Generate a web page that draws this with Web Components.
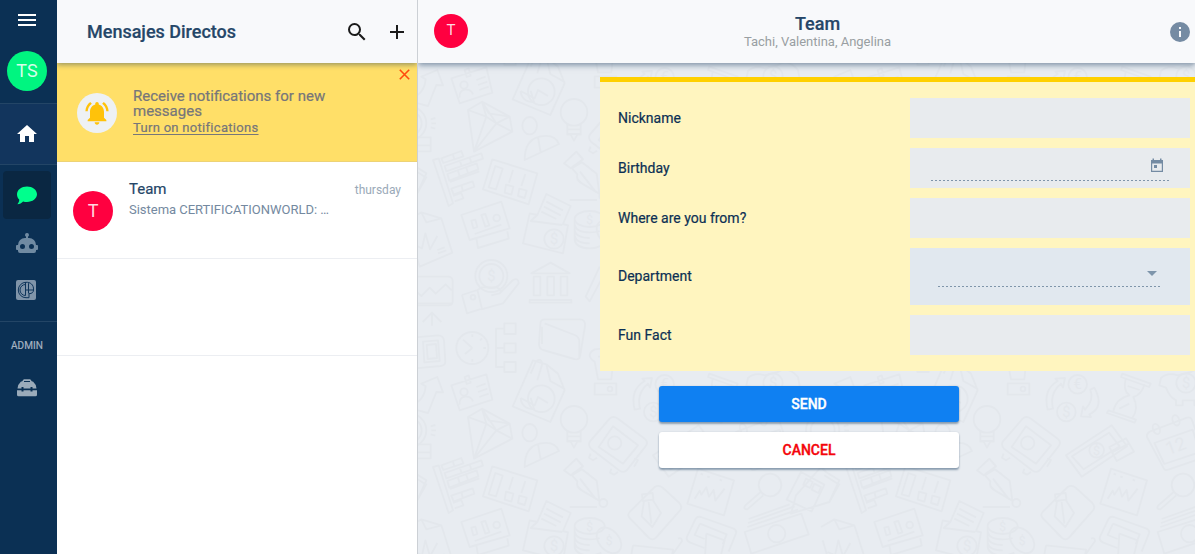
<!DOCTYPE html>
<html lang="es">
<head>
<meta charset="utf-8">
<title>Mensajes Directos</title>
<style>
html,body{margin:0;height:100%;overflow:hidden}
body{font-family:Roboto,"Liberation Sans",sans-serif;color:#254668}
</style>
</head>
<body>
<chat-app></chat-app>
<script>
const define = (name, html) => customElements.define(name, class extends HTMLElement {
  constructor() {
    super();
    const t = document.createElement('template');
    t.innerHTML = html;
    this.attachShadow({mode: 'open'}).append(t.content.cloneNode(true));
  }
});

define('round-avatar', `
<style>:host{display:flex;align-items:center;justify-content:center;flex:none;box-sizing:border-box;width:var(--size,40px);height:var(--size,40px);border-radius:50%;background:var(--fill,#ff0040);color:#ffffffd9;font-size:var(--text,18px);padding-bottom:1px}</style><slot></slot>`);

define('side-nav', `
<style>
:host{display:flex;flex-direction:column;width:57px;flex:none;background:#0b3054;color:#9aa9ba}
section{display:flex;flex-direction:column;align-items:center;width:54px;padding-right:3px;box-sizing:content-box;border-bottom:1px solid #234566}
.top{height:103px}.top svg{margin-top:10px}.top round-avatar{margin:21px 0 0;--fill:#00f580;padding-bottom:2px}
.home{height:60px;background:#12355d;justify-content:center}
.apps{height:156px;}
.tile{width:48px;height:48px;border-radius:4px;display:flex;align-items:center;justify-content:center}
.on{background:#0a2742;margin-top:6px;}
.admin{border:0}
.admin span{font-size:10px;line-height:12px;margin-top:18px;color:#a6b3c1;letter-spacing:.1px;-webkit-text-stroke:.2px #a6b3c1}
svg{display:block;flex:none}
</style>
<section class="top">
<svg width="20" height="20" viewBox="0 0 20 20"><path d="M1 4h18v2H1zM1 9h18v2H1zM1 14h18v2H1z" fill="#fff"/></svg>
<round-avatar>TS</round-avatar></section>
<section class="home"><svg width="24" height="24" viewBox="0 0 24 24"><path d="M10 20v-6h4v6h5v-8h3L12 3 2 12h3v8z" fill="#fff"/></svg></section>
<section class="apps">
<div class="tile on"><svg width="20" height="19" viewBox="0 0 20 19"><path d="M10 .6c5.500 0 10 3.400 10 7.700s-4.500 7.700-10 7.700c-1.400 0-2.700-.2-3.900-.6C4.700 17 2.600 18.200.4 18.200c1.300-1.500 2-3 1.800-4.600C.8 12.200 0 10.300 0 8.300 0 4 4.500.6 10 .6z" fill="#00ff8d"/></svg></div>
<div class="tile"><svg width="24" height="24" viewBox="0 0 24 24"><path fill="#708aa2" fill-rule="evenodd" d="M12 2a2 2 0 0 1 1 3.730V7h1a7 7 0 0 1 7 7h1a1 1 0 0 1 1 1v3a1 1 0 0 1-1 1h-1v1a2 2 0 0 1-2 2H5a2 2 0 0 1-2-2v-1H2a1 1 0 0 1-1-1v-3a1 1 0 0 1 1-1h1a7 7 0 0 1 7-7h1V5.730A2 2 0 0 1 12 2zM7.500 13a2.500 2.500 0 1 0 0 5 2.500 2.500 0 0 0 0-5zm9 0a2.500 2.500 0 1 0 0 5 2.500 2.500 0 0 0 0-5z"/></svg></div>
<div class="tile" style="height:46px;margin-right:2px"><svg width="20" height="20" viewBox="0 0 20 20"><rect width="20" height="20" rx="2" fill="#8094a9"/><g fill="none" stroke="#0f355b" stroke-width="1"><path d="M17.500 10C18 4.500 14 2 10 2.300a7.700 7.700 0 0 0 0 15.400h3V13.700c3 0 4.500-1.500 4.500-3.700M9.500 2v13.500M9.500 10h8"/><path d="M9.500 4.500a5.500 5.500 0 0 0 0 11M12.500 3.200V13.500"/></g></svg></div>
</section>
<section class="admin"><span>ADMIN</span>
<svg style="margin-top:27px" width="20" height="18" viewBox="0 0 20 18"><path fill="#9babba" d="M4 2.500h1L6.800.3h6.400L15 2.500h1Q19 5 19.500 9.500h-4V8h-2v1.500h-7V8h-2v1.500h-4Q1 5 4 2.500zM0 11.200h4.500v1.300h2v-1.300h7v1.300h2v-1.300H20v4.500q0 1.500-1.500 1.500h-17Q0 17.200 0 15.700z"/><path d="M7 2.500h6" stroke="#0b3054" stroke-width="1"/></svg>
</section>`);

define('notice-banner', `
<style>
:host{display:flex;align-items:center;height:98px;background:#ffdf68;border-bottom:1px solid #edd376;position:relative;padding-left:20px}
.bell{width:40px;height:40px;border-radius:50%;background:#eef1f4;display:flex;align-items:center;justify-content:center;margin-top:2px}
.copy{margin-left:16px;padding-top:1px;color:#76767a;font-size:15px;line-height:15px;width:220px;-webkit-text-stroke:.2px #76767a}
u{display:block;font-size:13px;line-height:16px;margin-top:1px;letter-spacing:.3px;text-underline-offset:1.500px}
.x{position:absolute;right:7px;top:6px}
</style>
<div class="bell"><svg width="28" height="28" viewBox="0 0 24 24" fill="#ffc20a"><path d="M12 22c1.100 0 2-.9 2-2h-4c0 1.100.9 2 2 2zM18 16v-5c0-3.070-1.640-5.640-4.500-6.320V4c0-.83-.67-1.500-1.500-1.500s-1.500.67-1.500 1.500v.68C7.630 5.360 6 7.920 6 11v5l-2 2v1h16v-1z"/><path d="M7.580 4.080 6.150 2.650C3.750 4.480 2.170 7.300 2.030 10.500h2c.15-2.650 1.510-4.970 3.550-6.420zm12.390 6.420h2c-.15-3.200-1.730-6.020-4.120-7.850l-1.420 1.430c2.020 1.450 3.390 3.770 3.540 6.420z"/></svg></div>
<div class="copy"><slot></slot><u>Turn on notifications</u></div>
<svg class="x" width="11" height="11" viewBox="0 0 11 11"><path d="m.8.800 9.400 9.400M10.200.8.800 10.200" stroke="#ff4b0e" stroke-width="1.600"/></svg>`);

define('chat-row', `
<style>
:host{display:flex;height:96px;border-bottom:1px solid #eceef2;padding:0 16px;box-sizing:content-box}
round-avatar{margin-top:29px;padding-bottom:2px}
.copy{margin:18px 0 0 16px;flex:1}
b{display:block;font-weight:400;font-size:15px;line-height:18px;color:#254668;-webkit-text-stroke:.2px #254668}
p{margin:3px 0 0;font-size:13px;line-height:18px;color:#7489a0;white-space:nowrap;letter-spacing:-.02px}
time{font-size:12px;line-height:14px;margin-top:21px;color:#9aa9b8}
</style>
<round-avatar>T</round-avatar><div class="copy"><b><slot name="name"></slot></b><p><slot></slot></p></div><time><slot name="time"></slot></time>`);

define('chat-list', `
<style>
:host{display:flex;flex-direction:column;width:360px;flex:none;background:#fff;border-right:1px solid #ccd0d5}
header{display:flex;align-items:center;height:63px;background:#f8f9fb;padding:0 8px 0 30px;position:relative;z-index:1;box-shadow:0 2px 5px #0b305466;clip-path:inset(0 0 -12px 0)}
h1{flex:1;margin:0;font-size:18px;font-weight:500;line-height:24px;color:#254668;-webkit-text-stroke:.2px #254668}
svg{display:block}
.blank{height:96px;border-bottom:1px solid #eceef2}
</style>
<header><h1>Mensajes Directos</h1>
<svg style="margin-right:16px" width="24" height="24" viewBox="0 0 24 24"><path fill="#1b1b1b" d="M15.500 14h-.79l-.28-.27A6.470 6.470 0 0 0 16 9.500 6.500 6.500 0 1 0 9.500 16c1.610 0 3.090-.59 4.230-1.570l.27.28v.79l5 4.990L20.490 19zm-6 0C7.010 14 5 11.990 5 9.500S7.010 5 9.500 5 14 7.010 14 9.500 11.990 14 9.500 14z"/></svg>
<svg width="24" height="24" viewBox="0 0 24 24"><path d="M12 5v14M5 12h14" stroke="#1b1b1b" stroke-width="2"/></svg></header>
<notice-banner>Receive notifications for new messages</notice-banner>
<chat-row><span slot="name">Team</span>Sistema CERTIFICATIONWORLD: …<span slot="time">thursday</span></chat-row>
<div class="blank"></div>`);

/* Wallpaper: one doodle tile drawn at triple scale and repeated every 413 x 307 px. */
define('doodle-wallpaper', `
<style>:host{display:block;position:absolute;inset:0;overflow:hidden;background:#e8ecf1}svg{display:block}</style>
<svg width="777" height="494" viewBox="0 0 2331 1482">
<defs><g id="t" fill="none" stroke="#e3e7ec" stroke-width="5.500" stroke-linejoin="round">
<path d="M-20 125 30 138 55 75 75 76 58 30 10 50 23 58Q20 95-10 110"/>
<path d="M100 55 205 22 223 98 125 130zM140 30l12-5 6 22-12 4zM125 113q-2-22 16-24t24 14M175 60l28-10M180 75l28-10M184 90l28-10"/><circle cx="138" cy="75" r="11"/>
<path d="M345-20 385-8 420 20 440 70 397 165 284 118zM385-8l12 50 40 22M338 20l15-35q15-15 20 5l-15 50M308 93l42 22 10-25 30 18M308 93q2 32 40 34l-10-35"/><circle cx="370" cy="95" r="40"/>
<path d="M150 150 192 125 275 170 283 215 168 275zM150 150l55 20 30 20 48 25M192 125l13 45-37 105 67-85-43-65M150 150l42-25 20 35 63 10-40 20"/>
<ellipse cx="335" cy="197" rx="22" ry="26"/><path d="M320 300Q320 240 365 230T423 252zM360 232l8 45"/>
<circle cx="468" cy="157" r="40"/><path d="M448 192v32h10l10 18 10-18h10v-32M448 208h40M448 222h40"/>
<path d="M575 155q10-10 25 0l82 62q10 10 0 22l-55 70q-10 10-22 2l-86-66q-10-10-3-22zM585 178 660 235 615 290 542 240zM518 260l-5 12 12 8 12-8M580 305l-4 12 12 6 12-8M648 275l12 4-12 20"/><circle cx="590" cy="228" r="20"/>
<path d="M45 300 62 295 105 430 92 438zM70 295l60-22 6 16-60 20zM80 318l110-38 5 16-110 38zM88 342l88-32 5 18-87 34zM96 366l88-32M100 386l64-22 5 16-62 24zM105 408l25-9 6 16-26 9M105 285l5 16M125 302l6 16M155 292l5 16M120 332l5 16M145 323l5 16M130 375l4 16"/>
<path d="M223 298 358 340 332 433 195 388zM232 318l22 8-20 62-22-6zM285 330l-12 38M322 342l-12 36M264 374l22 6-6 24-20-6zM304 386l22 6-6 22-20-6z"/>
<path d="M438 310 475 275 495 298 458 325zM462 325l30-18 44 34 8 60-48-28q-24-12-18-30zM486 335l48 62M455 420h82"/><circle cx="556" cy="408" r="12"/>
<path d="M130 465 250 425 275 505 155 540zM160 482l12-3 6 22-12 4zM190 465l12-3 12 34-12 4zM170 522l80-28M155 540l20-6 5 30 92-28-4-22"/><circle cx="236" cy="474" r="10"/>
<path d="M335 460 358 465 385 402 458 438 435 492 450 496 435 580 315 550zM358 465l-20 18 95 12M385 425l50 26M378 440l50 26M370 455l45 22"/><circle cx="408" cy="537" r="29"/>
<ellipse cx="515" cy="477" rx="45" ry="24"/><path d="M470 480v60q5 25 45 25 20 0 35-8M470 495q5 22 45 22 20 0 30-4M470 512q5 22 45 22M470 528q5 22 45 22"/><ellipse cx="573" cy="520" rx="30" ry="44" transform="rotate(-42 573 520)"/>
<path d="M-30 480 10 457 70 475 103 578 5 620-25 520M10 457l15 30 45-12M-10 555l22 10 10-45 14 48 22-40M58 570l22-8M60 580l25-9"/>
<circle cx="220" cy="648" r="48"/><circle cx="220" cy="648" r="36"/><path d="M132 705 178 690 192 682 235 682Q255 690 245 700L220 706M245 700 285 660Q302 652 302 670L255 730 190 748M132 705l15 55 45-14-14-56"/><circle cx="165" cy="712" r="7"/>
<path d="M340 640 398 608 455 640zM347 650h20v56h-20zM388 650h20v56h-20zM428 650h20v56h-20zM335 720h125v8H335z"/>
<path d="M545 620 503 710 515 724 552 655"/>
<path d="M-80 650H90q14 0 14 14v60q0 12-12 12H-80M-10 690l20 18 25-25 18 18 30-28 18 18M-80 730H100M42 755v42M42 758l-28 28M42 758l28 28"/>
<path d="M-40 835 60 826Q76 826 78 842L82 905Q82 916 68 918L-20 926M15 845l45-4 5 62-46 4zM26 855l28-3 3 42-28 3z"/>
<circle cx="163" cy="864" r="48"/><path d="M163 864l-28-25M163 864l-22 18M163 823v8M204 864h-8M163 905v-8M192 835l-6 6"/>
<path d="M259 790h34v32h-34zM259 850h34v28h-34zM259 906h34v30h-34zM259 806h-25v115h25M234 864h25"/>
<path d="M380 778h105q18 0 16 20l-14 86q-2 18-18 13l-94-27q-12-4-12-18l4-60q0-14 13-14zM380 790l90 35q14 6 14 20v52M372 800v52"/>
<path d="M530 970h65v34h-65zM530 905Q500 885 530 868L590 862 580 958h-40zM540 890h40"/><circle cx="576" cy="987" r="7"/>
<path d="M650 128Q635 68 680 42L673 35 702 33 696 62 690 50Q655 78 666 125zM790 62Q822 120 775 142L780 150 750 148 756 118 762 128Q790 100 778 68z"/><circle cx="740" cy="52" r="28"/><circle cx="706" cy="135" r="28"/>
<path d="M874 20 959 50 954 60 870 30zM832 130 915 158 911 167 828 138zM884 35Q875 70 895 85 855 95 847 132M941 52Q930 85 907 90 925 125 904 153M890 57l36 12M865 125l30-15"/>
<path d="M990 33Q1010 15 1040 25L1080 15Q1110-5 1140 30L1145 55Q1140 80 1110 98V115H1090V100H1055V115H1035V100Q1015 90 1005 62L985 55z"/><circle cx="1065" cy="48" r="29"/>
<path d="M948 210Q946 198 958 193L1068 152Q1080 148 1084 162L1118 260Q1120 270 1110 274L1012 308Q1000 312 996 300zM970 228l115-40 20 68-105 35z"/><ellipse cx="976" cy="186" rx="10" ry="16" transform="rotate(-20 976 186)"/><ellipse cx="1035" cy="160" rx="10" ry="16" transform="rotate(-20 1035 160)"/>
<path d="M705 265 842 175 888 238 752 329zM723 268 834 197 866 238 758 307zM835 240l50-26 24 40-52 28zM845 255l50-26"/><circle cx="797" cy="250" r="22"/>
<path d="M840 305 948 340 918 445 808 410zM830 395l15-24 5 12 15-22 8 28 14-20 5 32 28-36M848 320l7 3M868 328l7 3M905 338l7 3"/>
<circle cx="1056" cy="354" r="34"/><path d="M1028 375 982 415q-8 12 6 12l48-42"/>
<path d="M-30 300-15 315 25 340-5 405-120 440-105 385zM-90 315l70 38-38 80-75-35zM-75 335l20 10-8 18-20-10zM-50 350l20 10-8 18-20-10z"/>
<path d="M710 360q12-8 24 2l50 46q10 12 2 22l-72 82q-10 10-22 0l-56-58q-10-10 0-20zM672 382l32-4 2 20-32 4zM678 402l26-4 25 40-26 42-32-32zM692 405l8 65"/>
<path d="M833 455q5-8 16-5l96 34q12 5 9 15l-22 55M833 455l-26 54q-4 12 10 18l42 16M846 470l80 32-12 30M846 470l-16 34 30 12M865 500l55 20-15 60M865 500l-4 70"/>
<path d="M980 495 1150 440 1172 502 1000 560zM988 480 1140 428M990 468 1130 418M992 456 1115 412"/><circle cx="1076" cy="500" r="26"/>
<circle cx="-25" cy="190" r="50"/><circle cx="-25" cy="190" r="36"/><path d="M-70 232H38v42H-70M-20 256H38M38 178l14-4M40 190h14M38 202l14 4"/>
<path d="M20 350-20 325M26 350-5 405M645 535 765 548 755 610M645 535 635 590M780 515q12-5 12 8l-35 48"/>
<g fill="#e3e7ec" stroke="none" font-family="Roboto,sans-serif" font-size="44" text-anchor="middle"><text x="220" y="663">$</text><text x="408" y="552">$</text><text x="515" y="491" font-size="36">$</text><text x="573" y="533" font-size="36">$</text><text x="706" y="150">$</text><text x="740" y="67">€</text><text x="797" y="264" font-size="38">$</text><text x="1065" y="63">$</text><text x="1035" y="255" font-size="54" transform="rotate(-20 1035 240)">12</text></g>
</g></defs>
<use href="#t"/><use href="#t" x="1239"/><use href="#t" y="921"/><use href="#t" x="1239" y="921"/><use href="#t" x="-1239"/><use href="#t" x="-1239" y="921"/><use href="#t" y="-921"/><use href="#t" x="1239" y="-921"/>
</svg>`);

define('form-field', `
<style>
:host{display:flex;align-items:center;height:var(--h,40px)}
label{width:292px;font-size:14px;color:#0c3054;-webkit-text-stroke:.2px #0c3054;padding-bottom:var(--lift,0)}
.box{width:280px;height:100%;background:var(--box,#e8ebee);box-sizing:border-box;display:flex;justify-content:center;align-items:flex-start}
</style>
<label><slot></slot></label><div class="box"><slot name="control"></slot></div>`);

define('dotted-input', `
<style>
:host{display:flex;justify-content:flex-end;box-sizing:border-box}
:host{width:var(--w);height:var(--ht);padding:var(--pad);background:repeating-linear-gradient(90deg,#7f95aa 0 2px,transparent 2px 4px) bottom/100% 1px no-repeat}
</style><slot></slot>`);

define('action-button', `
<style>
:host{display:block;width:300px}
button{display:block;width:100%;height:36px;border:0;border-radius:3px;background:var(--bg);color:var(--fg);font:500 14px Roboto,sans-serif;-webkit-text-stroke:.35px var(--fg);box-shadow:0 2px 2px #0b305466,0 0 2px #0b305422;padding:0;}
</style><button><slot></slot></button>`);

define('chat-room', `
<style>
:host{display:flex;flex-direction:column;flex:1;min-width:0;position:relative;isolation:isolate}
header{height:63px;flex:none;display:flex;align-items:center;background:#f8f9fb;box-shadow:0 2px 6px #0b305480;clip-path:inset(0 0 -12px 0);position:relative;z-index:1;box-sizing:border-box;padding:0 4px 0 16px}
.title{flex:1;text-align:center;padding-right:1px}
h2{margin:0;font-size:18px;line-height:20px;font-weight:500;color:#254668;-webkit-text-stroke:.2px #254668}
p{margin:0;font-size:13px;line-height:15px;color:#999fa2}
main{position:relative;flex:1;overflow:hidden}
doodle-wallpaper{z-index:-1;top:-3px}
.form{margin:14px 0 0 182px;box-sizing:border-box;height:294px;background:#fff5bf;border-top:5px solid #ffd000;padding:16px 0 0 18px;display:flex;flex-direction:column;gap:10px}
.actions{display:flex;flex-direction:column;gap:10px;margin:15px 0 0 241px}
</style>
<header><round-avatar style="--size:34px;--text:15px;margin-bottom:1px;padding-bottom:2px">T</round-avatar>
<div class="title"><h2>Team</h2><p>Tachi, Valentina, Angelina</p></div>
<svg style="margin-right:-1px" width="24" height="24" viewBox="0 0 24 24"><path fill="#758ba3" d="M12 2a10 10 0 1 0 0 20 10 10 0 0 0 0-20zm1 15h-2v-6h2zm0-8h-2V7h2z"/></svg></header>
<main><doodle-wallpaper></doodle-wallpaper>
<div class="form">
<form-field>Nickname</form-field>
<form-field>Birthday<dotted-input slot="control" style="--w:238px;--ht:33px;--pad:10px 5px 0 0"><svg width="14" height="15" viewBox="0 0 14 15"><path fill="#748ba3" fill-rule="evenodd" d="M2.500.5H4V2h6V.5h1.500V2h1.500v12H1V2h1.500zM2.200 5.500v7.300h9.600V5.500zM4 7h3v3H4z"/></svg></dotted-input></form-field>
<form-field>Where are you from?</form-field>
<form-field style="--h:57px;--box:#e1e8ef;--lift:2px">Department<dotted-input slot="control" style="--w:224px;--ht:39px;--pad:23px 5px 0 0"><svg width="10" height="5" viewBox="0 0 10 5"><path d="M0 0h10L5 5z" fill="#7e95ab"/></svg></dotted-input></form-field>
<form-field>Fun Fact</form-field>
</div>
<div class="actions"><action-button style="--bg:#0f80f2;--fg:#fff">SEND</action-button><action-button style="--bg:#fff;--fg:#f4050b">CANCEL</action-button></div>
</main>`);

define('chat-app', `
<style>:host{display:flex;height:100vh;overflow:hidden}</style>
<side-nav></side-nav><chat-list></chat-list><chat-room></chat-room>`);
</script>
</body>
</html>
